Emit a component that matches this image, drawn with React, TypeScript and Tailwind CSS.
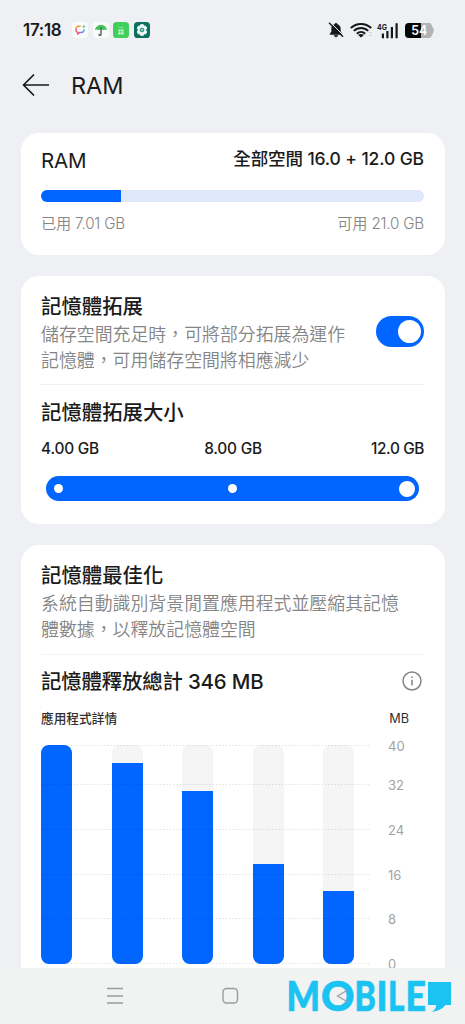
import type { ReactNode } from 'react'

interface Bar {
  id: number
  percent: number
}

const bars: Bar[] = [
  { id: 1, percent: 100 },
  { id: 2, percent: 91.8 },
  { id: 3, percent: 79 },
  { id: 4, percent: 45.6 },
  { id: 5, percent: 33.2 },
]

const ticks = [
  { label: '40', y: 0.5 },
  { label: '32', y: 39.5 },
  { label: '24', y: 84.5 },
  { label: '16', y: 129.5 },
  { label: '8', y: 173.5 },
  { label: '0', y: 218.5 },
]

// letters of the corner logo, each with its own left edge and advance
const logoLetters = [
  { char: 'M', x: 286.5, width: 33.5 },
  { char: 'O', x: 321, width: 33.5 },
  { char: 'B', x: 354.6, width: 21.4 },
  { char: 'I', x: 376.5, width: 11 },
  { char: 'L', x: 388, width: 16.5 },
  { char: 'E', x: 405.5, width: 20.5 },
]

function StatusBar() {
  return (
    <div className="flex h-[60px] items-center pl-[23px] pr-[31px]">
      <span className="w-[39px] whitespace-nowrap text-[17px] font-semibold leading-none tracking-[-0.3px]">17:18</span>
      <div className="ml-[10px] flex gap-[4.5px]">
        <svg className="h-4 w-4" viewBox="0 0 16 16" fill="none">
          <rect width="16" height="16" rx="4" fill="#fbfbfc" />
          <path d="M8.6 4.2H6.500a2.500 2.500 0 0 0-2.500 2.600" stroke="#f59a3c" strokeWidth="1.5" />
          <path d="M4 6.600v1.400a2.600 2.600 0 0 0 1.800 2.500v1.400l1.800-1.300" stroke="#f0567c" strokeWidth="1.5" />
          <path d="M7.200 10.600h2a2.700 2.700 0 0 0 2.600-1.800" stroke="#7d7cf2" strokeWidth="1.5" />
          <path d="M12 9V7.200" stroke="#42b8f2" strokeWidth="1.5" />
          <path d="m11.8 2.6.6 1.4 1.4.6-1.4.6-.6 1.400-.6-1.400-1.400-.6 1.400-.6z" fill="#4fd08a" />
        </svg>
        <svg className="h-4 w-4" viewBox="0 0 16 16" fill="none">
          <rect width="16" height="16" rx="4" fill="#fbfbfc" />
          <path d="M2 8.2a6 5.4 0 0 1 12 0c-1-.9-2.5-.9-3.2 0-.8-.9-4.8-.9-5.6 0-.7-.9-2.2-.9-3.2 0z" fill="#45c25b" />
          <path d="M8 6v6.4c0 1.4-2 1.4-2 0" stroke="#3d5a4b" strokeWidth="1.3" strokeLinecap="round" />
        </svg>
        <svg className="h-4 w-4" viewBox="0 0 16 16" fill="none">
          <rect width="16" height="16" rx="3.6" fill="#41cf5c" />
          <path d="M5.6 4.8c1.4 1.2 3.4 1.2 4.8 0" stroke="#a5eab0" strokeWidth="0.8" />
          <path d="M5.4 7.5h2.2v2.1H5.4zM8.4 7.5h2.2v2.1H8.4zM5.4 10.3h2.2v2.1H5.4zM8.4 10.3h2.2v2.1H8.4z" fill="#d5f7da" />
        </svg>
        <svg className="h-4 w-4" viewBox="0 0 16 16" fill="none">
          <rect width="16" height="16" rx="3.6" fill="#0d705f" />
          <path d="M6.7 2.6h2.6l.5 1.7 1.7-.4 1.3 2.2L11.6 8l1.2 1.9-1.3 2.2-1.7-.4-.5 1.7H6.7l-.5-1.7-1.7.4-1.3-2.2L4.4 8 3.2 6.1l1.3-2.2 1.7.4z" fill="#f1fbf8" stroke="#f1fbf8" strokeWidth="0.8" strokeLinejoin="round" />
          <circle cx="8" cy="8" r="1.9" fill="#8ccabb" stroke="#0d705f" strokeWidth="0.8" />
        </svg>
      </div>
      <div className="ml-auto flex items-center">
        <svg className="h-4 w-4" viewBox="0 0 16 16" fill="none">
          <path d="M8 1.2c.8 0 1.2.5 1.2 1.1 2.1.6 3.2 2.3 3.2 4.3v3l1.5 2.2v.7H2.1v-.7l1.5-2.2v-3c0-2 1.1-3.7 3.2-4.3 0-.6.4-1.1 1.2-1.1zM6.2 13.3h3.6c-.2 1-.9 1.6-1.8 1.6s-1.6-.6-1.8-1.6z" fill="#17181a" stroke="#17181a" strokeWidth="0.5" />
          <path d="M2.6.6 16 14" stroke="#eef0f3" strokeWidth="1" />
          <path d="M1 .8 15 14.8" stroke="#17181a" strokeWidth="1.4" />
        </svg>
        <svg className="ml-[6px] h-4 w-[22px]" viewBox="0 0 22 16" fill="none" stroke="#17181a" strokeWidth="2">
          <path d="M.8 6C6.5.5 15.5.5 21.2 6" />
          <path d="M3.8 8.9c4.2-4 10.2-4 14.4 0" />
          <path d="M6.8 11.7c2.4-2.3 6-2.3 8.4 0" />
          <path d="M8 13c1.7-1.5 4.3-1.5 6 0l-3 2.6z" fill="#17181a" stroke="none" />
          <path d="M19 10.5h3M19 13.5h3" stroke="#cfd1d4" strokeWidth="1.2" />
        </svg>
        <svg className="ml-[5px] h-[17px] w-[22px]" viewBox="0 0 22 17">
          <text x="0" y="7.5" fontFamily="Inter, sans-serif" fontWeight="700" fontSize="8" textLength="10" lengthAdjust="spacingAndGlyphs" fill="#17181a">4G</text>
          <path d="M4.8 11.5H7v4.8H4.8zM9.3 9h2.2v7.3H9.3zM13.8 5H16v11.3h-2.2zM18.5 1.2h2.2v15.1h-2.2z" fill="#17181a" />
        </svg>
        <svg className="ml-[6px] h-[15px] w-[29px]" viewBox="0 0 29 15">
          <path d="M4 0h20c1.2 0 2 .6 2.5 1.7l2 4.3q.5 1.5 0 3l-2 4.3c-.5 1.1-1.3 1.7-2.5 1.7H4a4 4 0 0 1-4-4V4a4 4 0 0 1 4-4z" fill="#b2b3b5" />
          <path d="M4 0h12v15H4a4 4 0 0 1-4-4V4a4 4 0 0 1 4-4z" fill="#060606" />
          <text x="6.2" y="12.2" fontFamily="Inter, sans-serif" fontWeight="600" fontSize="13" textLength="16" lengthAdjust="spacingAndGlyphs" fill="#fff">54</text>
        </svg>
      </div>
    </div>
  )
}

function Header() {
  return (
    <div className="flex h-[50px] items-center pl-[22px]">
      <svg className="h-6 w-[27px]" viewBox="0 0 27 24" fill="none" stroke="#17181a" strokeWidth="1.7" strokeLinecap="round" strokeLinejoin="round">
        <path d="M11.5 2 1.5 12l10 10M1.5 12h25" />
      </svg>
      <h1 className="ml-[22px] mt-px text-[23.5px] font-normal leading-none tracking-[-0.1px]">RAM</h1>
    </div>
  )
}

function Card({ className, children }: { className: string; children: ReactNode }) {
  return <section className={`mx-[20.5px] bg-white px-[20.5px] ${className}`}>{children}</section>
}

function UsageCard() {
  return (
    <Card className="mt-[23px] h-[122px] rounded-[18px]">
      <div className="flex justify-between whitespace-nowrap">
        <h2 className="mt-[14px] h-[28px] text-[20.5px] font-normal leading-[28px] tracking-[-0.2px]">RAM</h2>
        <span className="mt-[12px] h-[28px] text-[17.5px] font-[450] leading-[28px] tracking-[-0.12px]">全部空間 16.0 + 12.0 GB</span>
      </div>
      <div className="mt-[14.5px] h-[12.5px] overflow-hidden rounded-full bg-[#dfe7fd]">
        <div className="h-full w-[21%] bg-[#0066ff]" />
      </div>
      <div className="mt-[10px] flex h-[24px] justify-between whitespace-nowrap text-[15.2px] font-[350] leading-[24px] tracking-[-0.2px] text-[#858585]">
        <span>已用 7.01 GB</span>
        <span>可用 21.0 GB</span>
      </div>
    </Card>
  )
}

function ExpansionCard() {
  return (
    <Card className="mt-[21px] h-[248px] rounded-[18px] pt-[17px]">
      <div className="flex">
        <div className="flex-1 whitespace-nowrap">
          <h2 className="h-[29px] text-[20.4px] font-[450] leading-[28px]">記憶體拓展</h2>
          <p className="h-[52px] text-[17.9px] font-[350] leading-[26px] text-[#858585]">
            儲存空間充足時，可將部分拓展為運作
            <br />
            記憶體，可用儲存空間將相應減少
          </p>
        </div>
        <div className="mt-[23px] flex h-[31px] w-[48px] items-center justify-end rounded-full bg-[#0066ff] pr-[3.5px]">
          <span className="h-[23px] w-[23px] rounded-full bg-white" />
        </div>
      </div>
      <div className="mt-[10px] h-px bg-[#efefef]" />
      <h2 className="mt-[14px] h-[28px] whitespace-nowrap text-[20.4px] font-[450] leading-[28px]">記憶體拓展大小</h2>
      <div className="mt-[10px] flex h-[24px] justify-between text-[15.4px] font-[450] leading-[24px] tracking-[-0.2px]">
        <span>4.00 GB</span>
        <span className="-ml-[4px]">8.00 GB</span>
        <span className="tracking-[-0.4px]">12.0 GB</span>
      </div>
      <div className="mx-[5px] mt-[15px] flex h-[25px] items-center justify-between rounded-full bg-[#0066ff] pl-[8px] pr-[4.5px]">
        <span className="h-[9px] w-[9px] rounded-full bg-white" />
        <span className="ml-[3px] h-[9px] w-[9px] rounded-full bg-white" />
        <span className="h-[16px] w-[16px] rounded-full bg-white" />
      </div>
    </Card>
  )
}

function Chart() {
  return (
    <div className="relative mt-[16px] h-[219px]">
      <div className="flex h-full w-[313px] justify-between">
        {bars.map((bar) => (
          <div key={bar.id} className="flex h-full w-[31px] items-end overflow-hidden rounded-[8px] bg-[#f5f5f5]">
            <div className="w-full bg-[#0066ff]" style={{ height: `${bar.percent}%` }} />
          </div>
        ))}
      </div>
      {/* grid lines run over the bars */}
      <svg className="absolute left-0 top-0 h-[219px] w-[330px]" viewBox="0 0 330 219">
        {ticks.map((tick) => (
          <path key={tick.label} d={`M0 ${tick.y}H330`} stroke="#000" strokeOpacity="0.12" strokeWidth="1" strokeDasharray="1.3 2" />
        ))}
      </svg>
      {ticks.map((tick) => (
        <span
          key={tick.label}
          className="absolute left-[347px] h-[16px] text-[13px] leading-[16px] text-[#a3a3a3]"
          style={{ top: tick.y - 7.5 }}
        >
          {tick.label}
        </span>
      ))}
    </div>
  )
}

function OptimizationCard() {
  return (
    <Card className="mt-[21px] h-[423px] overflow-hidden rounded-t-[18px] pt-[17px]">
      <h2 className="h-[29px] whitespace-nowrap text-[20.4px] font-[450] leading-[28px]">記憶體最佳化</h2>
      <p className="h-[52px] whitespace-nowrap text-[17.9px] font-[350] leading-[26px] text-[#858585]">
        系統自動識別背景閒置應用程式並壓縮其記憶
        <br />
        體數據，以釋放記憶體空間
      </p>
      <div className="mt-[11px] h-px bg-[#f3f3f3]" />
      <div className="mt-[13px] flex h-[28px] items-center justify-between">
        <h2 className="whitespace-nowrap text-[20.4px] font-[450] leading-[28px] tracking-[-0.15px]">記憶體釋放總計 346 MB</h2>
        <svg className="-mt-[3px] mr-[2px] h-[20px] w-[20px]" viewBox="0 0 20 20" fill="none" stroke="#858585" strokeWidth="1.5">
          <circle cx="10" cy="10" r="9" />
          <path d="M10 8.8v5.6M10 5.5v1.6" />
        </svg>
      </div>
      <div className="mt-[13px] flex h-[20px] items-center justify-between text-[12.7px] font-[450] leading-[20px] text-[#303030]">
        <span>應用程式詳情</span>
        <span className="mr-[15px] font-normal">MB</span>
      </div>
      <Chart />
    </Card>
  )
}

function NavBar() {
  return (
    <div className="h-[56px] bg-[#f0f3f2]">
      <svg className="h-[56px] w-full" viewBox="0 0 465 56" fill="none" stroke="#9b9d9c" strokeWidth="1.4">
        <path d="M107 20.5h16M107 28h16M107 35h16" />
        <rect x="223" y="20.5" width="14.5" height="14.5" rx="3.5" />
        <g fontFamily="Lato, sans-serif" fontWeight="900" fontSize="41" fill="#1bc3f3" stroke="#1bc3f3" strokeWidth="0.7">
          {logoLetters.map((letter) => (
            <text key={letter.char} x={letter.x} y="43" textLength={letter.width} lengthAdjust="spacingAndGlyphs">
              {letter.char}
            </text>
          ))}
        </g>
        <path d="M428 14h23v23h-5.5q-4 5.500-14 7 5-3 4.500-7h-8z" fill="#1bc3f3" stroke="none" />
        <path d="m347 22.5-9.500 5.500 9.500 5.500" strokeWidth="1.2" />
      </svg>
    </div>
  )
}

export default function App() {
  return (
    <div className="flex h-[1024px] w-[465px] flex-col overflow-hidden bg-[#eef0f3] font-[Inter,'Noto_Sans_CJK_TC',sans-serif] text-[#1b1b1b]" lang="zh-Hant">
      <StatusBar />
      <Header />
      <UsageCard />
      <ExpansionCard />
      <OptimizationCard />
      <NavBar />
    </div>
  )
}
